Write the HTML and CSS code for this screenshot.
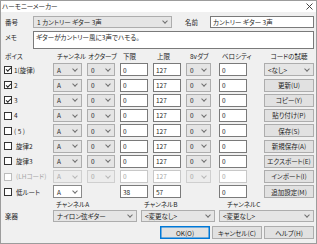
FILE: index.html
```html
<!DOCTYPE html>
<html lang="ja">
<head>
<meta charset="utf-8">
<title>ハーモニーメーカー</title>
<link rel="stylesheet" href="styles.css">
</head>
<body>
<div class="window">
  <div class="titlebar">
    <span class="title">ハーモニーメーカー</span>
    <svg class="close" width="7" height="7" viewBox="0 0 7 7"><path d="M0.5 0.5 L6.5 6.5 M6.5 0.5 L0.5 6.5" stroke="#333" stroke-width="0.9" fill="none"/></svg>
  </div>
  <div class="body">
    <div class="top">
      <span class="lbl">番号</span>
      <div class="field select">1 カントリー ギター 3声</div>
      <span class="lbl lbl-name">名前</span>
      <div class="field input">カントリー ギター 3声</div>
    </div>
    <div class="memo-row">
      <span class="lbl memo-lbl">メモ</span>
      <div class="input memo">ギターがカントリー風に3声でハモる。</div>
    </div>

    <div class="voices">
      <span class="hd hd-voice">ボイス</span>
      <span class="hd hd-ch">チャンネル</span>
      <span class="hd hd-oct">オクターブ</span>
      <span class="hd hd-lo">下限</span>
      <span class="hd hd-hi">上限</span>
      <span class="hd hd-8v">8vダブ</span>
      <span class="hd hd-vel">ベロシティ</span>
      <span class="hd hd-chord">コードの試聴</span>

      <div class="voice"><span class="cb on"></span>1(旋律)</div>
      <div class="field select">A</div>
      <div class="field select">0</div>
      <div class="field input">0</div>
      <div class="field input">127</div>
      <div class="field select sel8">0</div>
      <div class="field input">0</div>
      <div class="field select chord">&lt;なし&gt;</div>

      <div class="voice"><span class="cb on"></span>2</div>
      <div class="field select">A</div>
      <div class="field select">0</div>
      <div class="field input">0</div>
      <div class="field input">127</div>
      <div class="field select sel8">0</div>
      <div class="field input">0</div>
      <div class="btn chord">更新(U)</div>

      <div class="voice"><span class="cb on"></span>3</div>
      <div class="field select">A</div>
      <div class="field select">0</div>
      <div class="field input">0</div>
      <div class="field input">127</div>
      <div class="field select sel8">0</div>
      <div class="field input">0</div>
      <div class="btn chord">コピー(Y)</div>

      <div class="voice"><span class="cb"></span>4</div>
      <div class="field select">A</div>
      <div class="field select">0</div>
      <div class="field input">0</div>
      <div class="field input">127</div>
      <div class="field select sel8">0</div>
      <div class="field input">0</div>
      <div class="btn chord">貼り付け(P)</div>

      <div class="voice"><span class="cb"></span>( 5 )</div>
      <div class="field select">A</div>
      <div class="field select">0</div>
      <div class="field input">0</div>
      <div class="field input">127</div>
      <div class="field select sel8">0</div>
      <div class="field input">0</div>
      <div class="btn chord">保存(S)</div>

      <div class="voice"><span class="cb"></span><span class="vl">旋律2</span></div>
      <div class="field select">A</div>
      <div class="field select">0</div>
      <div class="field input">0</div>
      <div class="field input">127</div>
      <div class="field select sel8">0</div>
      <div class="field input">0</div>
      <div class="btn chord">新規保存(A)</div>

      <div class="voice"><span class="cb"></span><span class="vl">旋律3</span></div>
      <div class="field select">A</div>
      <div class="field select">0</div>
      <div class="field input">0</div>
      <div class="field input">127</div>
      <div class="field select sel8">0</div>
      <div class="field input">0</div>
      <div class="btn chord">エクスポート(E)</div>

      <div class="voice dis"><span class="cb"></span><span class="vl">(LHコード)</span></div>
      <div class="field select dis">A</div>
      <div class="field select dis">0</div>
      <div class="field input dis">0</div>
      <div class="field input dis">127</div>
      <div class="field select sel8 dis">0</div>
      <div class="field input dis">0</div>
      <div class="btn chord">インポート(I)</div>

      <div class="voice"><span class="cb"></span><span class="vl">低ルート</span></div>
      <div class="field select white">A</div>
      <div class="empty"></div>
      <div class="field input">38</div>
      <div class="field input">57</div>
      <div class="empty"></div>
      <div class="field input">0</div>
      <div class="btn chord">追加設定(M)</div>
    </div>

    <div class="inst">
      <span></span>
      <span class="hd ilbl">チャンネルA</span>
      <span class="hd ilbl">チャンネルB</span>
      <span class="hd ilbl ilbl-c">チャンネルC</span>
      <span class="lbl">楽器</span>
      <div class="field select">ナイロン弦ギター</div>
      <div class="field select">&lt;変更なし&gt;</div>
      <div class="field select">&lt;変更なし&gt;</div>
    </div>

    <div class="buttons">
      <div class="btn dbtn default">OK(O)</div>
      <div class="btn dbtn">キャンセル(C)</div>
      <div class="btn dbtn">ヘルプ(H)</div>
    </div>
  </div>
</div>
</body>
</html>
```

FILE: styles.css
```css
* { box-sizing: border-box; }
html, body { margin: 0; padding: 0; }
body {
  width: 317px;
  height: 244px;
  overflow: hidden;
  font-family: "Noto Sans CJK JP", "Noto Sans", sans-serif;
  font-size: 6.5px;
  font-feature-settings: "palt";
  color: #1e1e1e;
  background: #fff;
  line-height: 1;
}
.window {
  width: 317px;
  height: 244px;
  border: 1px solid #9c9c9c;
  background: #f0f0f0;
  display: flex;
  flex-direction: column;
}
.titlebar {
  height: 11px;
  flex: none;
  background: #fff;
  display: flex;
  align-items: center;
  justify-content: space-between;
  padding: 0 3px 0 1px;
}
.title { font-size: 6.5px; }
.close { display: block; }
.body {
  padding: 4px 2px 0 3px;
  display: flex;
  flex-direction: column;
}
.top {
  display: grid;
  grid-template-columns: 29px 139px 38px 1fr;
  height: 12px;
  align-items: center;
}
.lbl { padding-left: 1px; }
.lbl-name { padding-left: 13px; }
.field {
  height: 12px;
  display: flex;
  align-items: center;
  padding: 0 2px;
  white-space: nowrap;
  overflow: hidden;
}
.input {
  background: #fff;
  border: 1px solid #7a7a7a;
}
.select {
  background: #e5e5e5;
  border: 1px solid #adadad;
  justify-content: space-between;
  padding-left: 3px;
}
.select::after {
  content: "";
  flex: none;
  width: 3px;
  height: 3px;
  border-right: 1px solid #707070;
  border-bottom: 1px solid #707070;
  transform: translateY(-1px) rotate(45deg);
  margin-right: 2px;
}
.select.white { background: #fff; border-color: #8a8a8a; }
.memo-row {
  margin-top: 3px;
  display: grid;
  grid-template-columns: 29px 1fr;
  align-items: start;
}
.memo-lbl { padding-top: 3px; }
.memo {
  height: 18px;
  padding: 2px 2px;
}
.voices {
  margin-top: 3px;
  display: grid;
  grid-template-columns: 44px 29px 28px 28px 28px 28px 28px 1fr;
  grid-template-rows: 9px repeat(9, 13px);
  column-gap: 5px;
  row-gap: 2.25px;
  align-items: center;
}
.voices .field { height: 13px; }
.hd { white-space: nowrap; }
.hd-voice { padding-left: 1px; }
.hd-ch { padding-left: 4px; }
.hd-oct { padding-left: 1px; }
.hd-lo { padding-left: 3px; }
.hd-hi { padding-left: 4px; }
.hd-8v { padding-left: 4px; }
.hd-vel { padding-left: 3px; }
.hd-chord { justify-self: end; width: 50px; text-align: center; }
.voice {
  display: flex;
  align-items: center;
  gap: 2px;
  white-space: nowrap;
}
.vl { padding-left: 2px; }
.cb {
  flex: none;
  width: 8px;
  height: 8px;
  border: 1px solid #333;
  background: #fff;
  display: flex;
  align-items: center;
  justify-content: center;
}
.cb.on::after {
  content: "";
  width: 2px;
  height: 4px;
  border-right: 1px solid #222;
  border-bottom: 1px solid #222;
  transform: translateY(-0.5px) rotate(45deg);
}
.sel8 { width: 25px; }
.chord { justify-self: end; width: 50px; }
.btn {
  height: 13px;
  background: #e1e1e1;
  border: 1px solid #adadad;
  display: flex;
  align-items: center;
  justify-content: center;
  white-space: nowrap;
}
.voice.dis { color: #a6a6a6; }
.voice.dis .cb { border-color: #bcbcbc; }
.select.dis { background: #ececec; border-color: #cfcfcf; color: #a6a6a6; }
.select.dis::after { border-color: #b8b8b8; }
.input.dis { border-color: #c8c8c8; color: #a6a6a6; }
.inst {
  margin-top: 2px;
  display: grid;
  grid-template-columns: 45px 84px 74px 95px;
  grid-template-rows: 8px 12px;
  column-gap: 4px;
  row-gap: 2px;
  align-items: center;
}
.ilbl { padding-left: 3px; }
.ilbl-c { padding-left: 8px; }
.buttons {
  margin-top: 4px;
  display: flex;
  justify-content: flex-end;
  gap: 2px;
}
.dbtn { width: 50px; }
.default { border-color: #0078d7; box-shadow: inset 0 0 0 0.5px #0078d7; }
```
